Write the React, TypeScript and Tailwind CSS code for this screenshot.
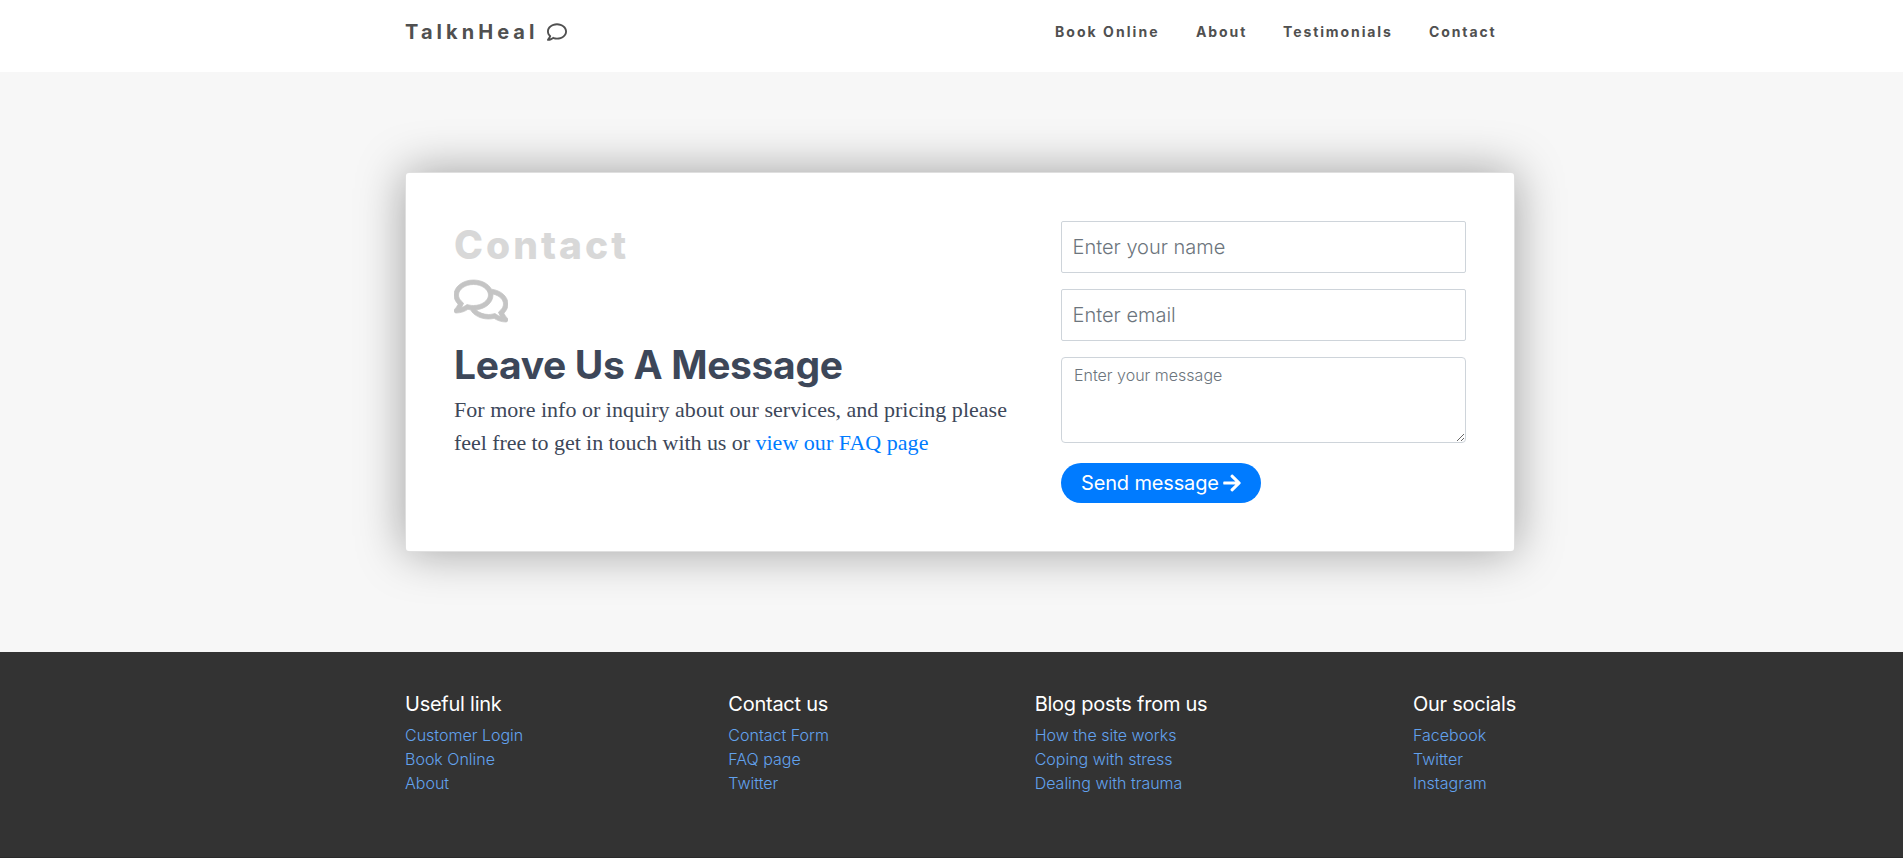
import { FaArrowRight, FaRegComment, FaRegComments } from "react-icons/fa";

const navLinks = [
  { label: "Book Online", className: "w-[105px] tracking-[2.05px]" },
  { label: "About", className: "w-[51px] tracking-[1.9px]" },
  { label: "Testimonials", className: "w-[110px] tracking-[1.9px]" },
  { label: "Contact", className: "w-[70px] tracking-[1.9px]" },
];

const footerColumns = [
  {
    title: "Useful link",
    className: "w-[118px]",
    links: ["Customer Login", "Book Online", "About"],
  },
  {
    title: "Contact us",
    className: "w-[101px]",
    links: ["Contact Form", "FAQ page", "Twitter"],
  },
  {
    title: "Blog posts from us",
    className: "w-[173px]",
    links: ["How the site works", "Coping with stress", "Dealing with trauma"],
  },
  {
    title: "Our socials",
    className: "w-[102px]",
    links: ["Facebook", "Twitter", "Instagram"],
  },
];

function Header() {
  return (
    <header className="h-[72px] bg-white pt-[17px] text-[#505050]">
      <div className="ml-[405px] flex w-[1110px] items-center justify-between pr-4">
        <a href="#" className="flex items-center text-[20px] leading-[30px] font-bold">
          <span className="w-[142px] tracking-[4.05px]">TalknHeal</span>
          <FaRegComment className="-mt-px size-5" />
        </a>
        <nav className="flex gap-9 text-[14px] leading-[22px] font-bold">
          {navLinks.map((link) => (
            <a key={link.label} href="#" className={`whitespace-nowrap ${link.className}`}>
              {link.label}
            </a>
          ))}
        </nav>
      </div>
    </header>
  );
}

function ContactCard() {
  return (
    <section className="ml-[405px] flex h-[380px] w-[1110px] justify-between rounded border border-black/[0.125] bg-white p-12 shadow-[0_0_48px_rgba(0,0,0,0.36)]">
      <div className="w-[570px]">
        <h1 className="text-[39px] leading-[48px] font-extrabold tracking-[3px] text-[#d8d8d8]">Contact</h1>
        <FaRegComments className="mt-2 h-12 w-[54px] stroke-[#c4c4c4] stroke-[8px] text-[#c4c4c4]" />
        <h2 className="mt-4 text-[39px] leading-[48px] font-bold tracking-[-0.33px] whitespace-nowrap text-[#3d4759]">
          Leave Us A Message
        </h2>
        <p className="mt-1 font-['Liberation_Serif',serif] text-[22px] leading-[33px] text-[#3d4759]">
          <span className="tracking-[0.02px]">For more info or inquiry about our services, and pricing please</span>
          <br />
          <span className="tracking-[-0.06px]">feel free to get in touch with us or </span>
          <a href="#" className="tracking-[0.03px] text-[#007bff]">
            view our FAQ page
          </a>
        </p>
      </div>
      <form className="flex w-[405px] flex-col">
        <input
          placeholder="Enter your name"
          className="h-[52px] w-full rounded-[2px] border border-[#ced4da] bg-white px-[10.5px] text-[20px] font-light placeholder:text-[#6c757d]"
        />
        <input
          placeholder="Enter email"
          className="mt-4 h-[52px] w-full rounded-[2px] border border-[#ced4da] bg-white px-[10.5px] text-[20px] font-light placeholder:text-[#6c757d]"
        />
        <textarea
          placeholder="Enter your message"
          className="mt-4 h-[86px] w-full resize-y rounded border border-[#ced4da] bg-white px-3 py-[5px] text-[16px] leading-6 font-light placeholder:text-[#6c757d]"
        />
        <button
          type="button"
          className="mt-5 flex h-10 w-[200px] items-center rounded-full bg-[#007bff] pl-5 text-[20px] leading-[38px] whitespace-nowrap text-white"
        >
          <span className="w-[142px] text-left tracking-[-0.15px]">Send message</span>
          <FaArrowRight className="h-5 w-[18px]" />
        </button>
      </form>
    </section>
  );
}

function Footer() {
  return (
    <footer className="h-[206px] border-b border-[#2a2a2a] bg-[#333333] pt-10">
      <div className="ml-[405px] flex w-[1110px] justify-between">
        {footerColumns.map((column) => (
          <div key={column.title} className={column.className}>
            <h5 className="text-[20px] leading-6 tracking-[-0.25px] whitespace-nowrap text-white">{column.title}</h5>
            <ul className="mt-[7px] text-[16px] leading-6 font-light text-[#62a2ee]">
              {column.links.map((label) => (
                <li key={label}>
                  <a href="#" className="whitespace-nowrap">
                    {label}
                  </a>
                </li>
              ))}
            </ul>
          </div>
        ))}
      </div>
    </footer>
  );
}

export default function App() {
  return (
    <div className="h-[858px] overflow-hidden bg-[#f7f7f7] font-['Inter',sans-serif]">
      <Header />
      <main className="h-[580px] pt-[100px]">
        <ContactCard />
      </main>
      <Footer />
    </div>
  );
}
